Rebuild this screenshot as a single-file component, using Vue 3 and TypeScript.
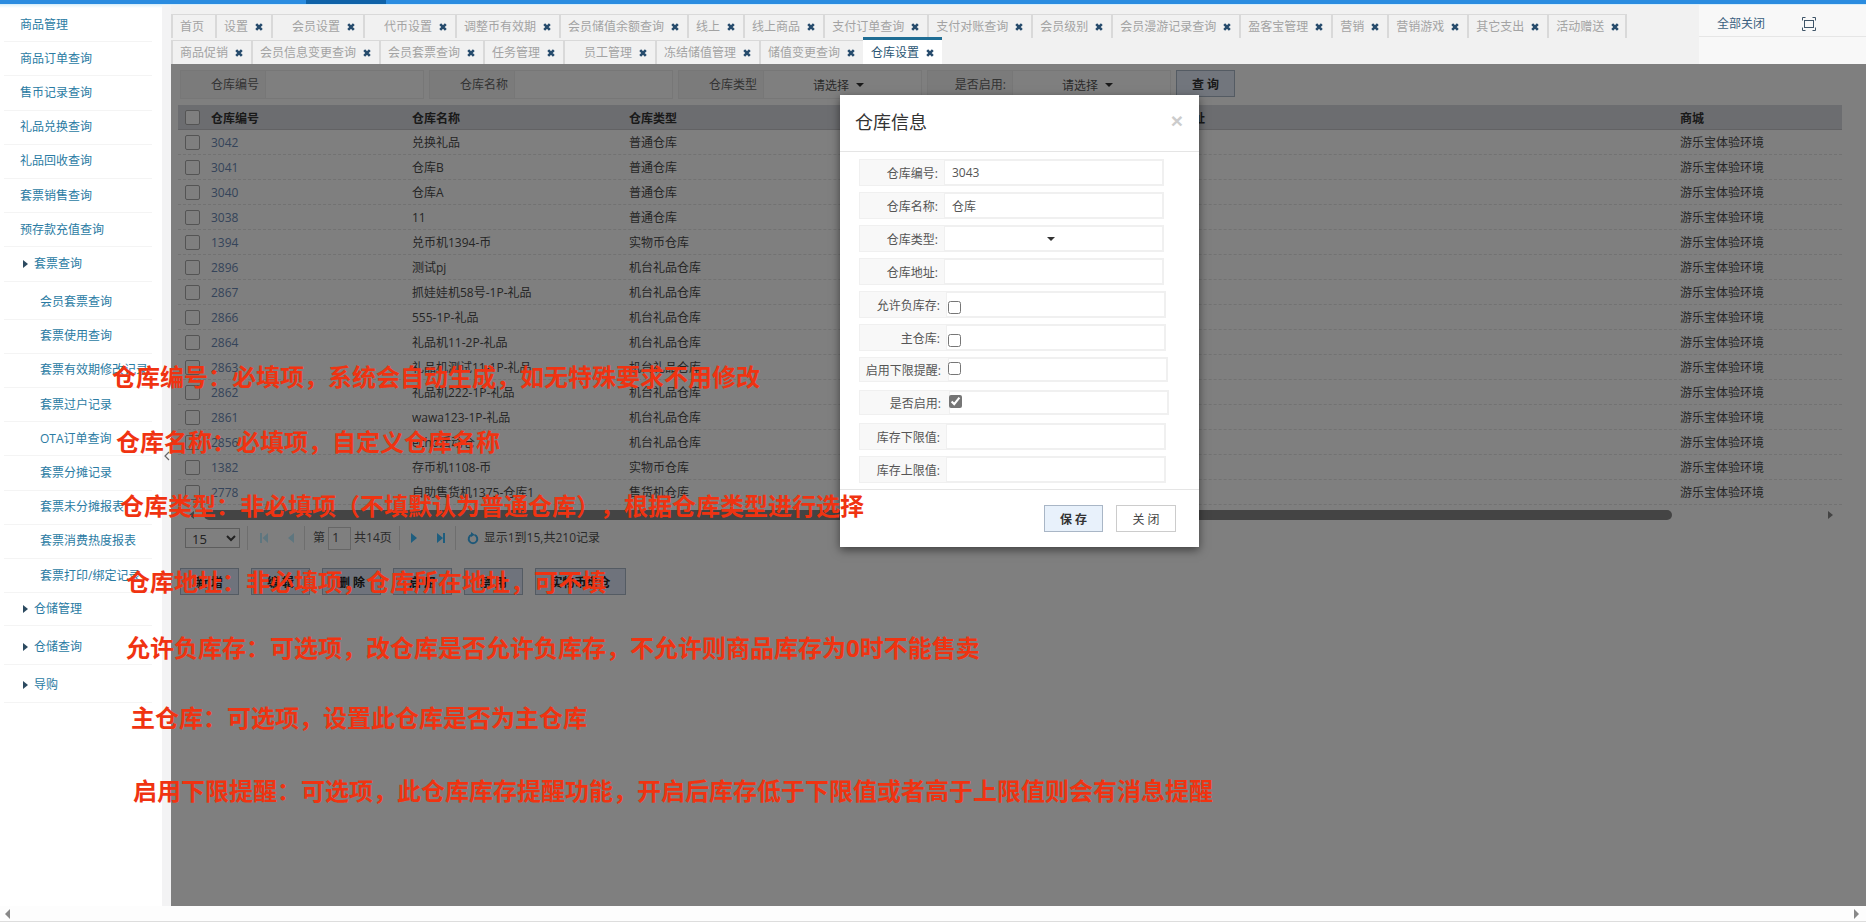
<script setup lang="ts">
type TabItem = { name: string; wide?: boolean; plain?: boolean; active?: boolean };
type MenuItem = { name: string; group?: boolean };
type RowItem = { id: string; name: string; kind: string };
type FormRow = { label: string; value?: string; type: 'text' | 'select' | 'check'; checked?: boolean; cls: string };
type Note = { text: string; left: number; top: number };

const tabRow1: TabItem[] = [
  { name: '首页', plain: true },
  { name: '设置' },
  { name: '会员设置', wide: true },
  { name: '代币设置', wide: true },
  { name: '调整币有效期' },
  { name: '会员储值余额查询' },
  { name: '线上' },
  { name: '线上商品' },
  { name: '支付订单查询' },
  { name: '支付对账查询' },
  { name: '会员级别' },
  { name: '会员漫游记录查询' },
  { name: '盈客宝管理' },
  { name: '营销' },
  { name: '营销游戏' },
  { name: '其它支出' },
  { name: '活动赠送' },
];
const tabRow2: TabItem[] = [
  { name: '商品促销' },
  { name: '会员信息变更查询' },
  { name: '会员套票查询' },
  { name: '任务管理' },
  { name: '员工管理', wide: true },
  { name: '冻结储值管理' },
  { name: '储值变更查询' },
  { name: '仓库设置', active: true },
];

const menuTop: MenuItem[] = [
  { name: '商品管理' },
  { name: '商品订单查询' },
  { name: '售币记录查询' },
  { name: '礼品兑换查询' },
  { name: '礼品回收查询' },
  { name: '套票销售查询' },
  { name: '预存款充值查询' },
  { name: '套票查询', group: true },
];
const menuSub = [
  '会员套票查询',
  '套票使用查询',
  '套票有效期修改记录',
  '套票过户记录',
  'OTA订单查询',
  '套票分摊记录',
  '套票未分摊报表',
  '套票消费热度报表',
  '套票打印/绑定记录',
];
const menuBottom = ['仓储管理', '仓储查询', '导购'];

const rows: RowItem[] = [
  { id: '3042', name: '兑换礼品', kind: '普通仓库' },
  { id: '3041', name: '仓库B', kind: '普通仓库' },
  { id: '3040', name: '仓库A', kind: '普通仓库' },
  { id: '3038', name: '11', kind: '普通仓库' },
  { id: '1394', name: '兑币机1394-币', kind: '实物币仓库' },
  { id: '2896', name: '测试pj', kind: '机台礼品仓库' },
  { id: '2867', name: '抓娃娃机58号-1P-礼品', kind: '机台礼品仓库' },
  { id: '2866', name: '555-1P-礼品', kind: '机台礼品仓库' },
  { id: '2864', name: '礼品机11-2P-礼品', kind: '机台礼品仓库' },
  { id: '2863', name: '礼品机测试11-1P-礼品', kind: '机台礼品仓库' },
  { id: '2862', name: '礼品机222-1P-礼品', kind: '机台礼品仓库' },
  { id: '2861', name: 'wawa123-1P-礼品', kind: '机台礼品仓库' },
  { id: '2856', name: 'echo活动仓', kind: '机台礼品仓库' },
  { id: '1382', name: '存币机1108-币', kind: '实物币仓库' },
  { id: '2778', name: '自助售货机1375-仓库1', kind: '售货机仓库' },
];

const actions = ['新 增', '编 辑', '删 除', '启 用', '禁 用', '实物币盘仓'];

const formRows: FormRow[] = [
  { label: '仓库编号:', value: '3043', type: 'text', cls: '' },
  { label: '仓库名称:', value: '仓库', type: 'text', cls: '' },
  { label: '仓库类型:', type: 'select', cls: '' },
  { label: '仓库地址:', type: 'text', cls: '' },
  { label: '允许负库存:', type: 'check', cls: 'w87 low' },
  { label: '主仓库:', type: 'check', cls: 'w87 low' },
  { label: '启用下限提醒:', type: 'check', cls: 'w89 short' },
  { label: '是否启用:', type: 'check', checked: true, cls: 'w90 short' },
  { label: '库存下限值:', type: 'text', cls: 'w87' },
  { label: '库存上限值:', type: 'text', cls: 'w87' },
];

const notes: Note[] = [
  { text: '仓库编号：必填项，系统会自动生成，如无特殊要求不用修改', left: 112, top: 361 },
  { text: '仓库名称：必填项，自定义仓库名称', left: 116, top: 426 },
  { text: '仓库类型：非必填项（不填默认为普通仓库），根据仓库类型进行选择', left: 120, top: 490 },
  { text: '仓库地址：非必填项，仓库所在地址，可不填', left: 126, top: 566 },
  { text: '允许负库存：可选项，改仓库是否允许负库存，不允许则商品库存为0时不能售卖', left: 126, top: 632 },
  { text: '主仓库：可选项，设置此仓库是否为主仓库', left: 131, top: 702 },
  { text: '启用下限提醒：可选项，此仓库库存提醒功能，开启后库存低于下限值或者高于上限值则会有消息提醒', left: 133, top: 775 },
];
</script>

<template>
  <div class="page">
    <div class="topbar"><span class="topbar-mark"></span></div>

    <div class="body">
      <aside class="sidebar">
        <div
          v-for="item in menuTop"
          :key="item.name"
          class="menu-item"
          :class="{ group: item.group }"
        >
          <i v-if="item.group" class="menu-arrow"></i>{{ item.name }}
        </div>
        <div class="menu-sub">
          <div v-for="name in menuSub" :key="name" class="menu-item sub">{{ name }}</div>
        </div>
        <div v-for="name in menuBottom" :key="name" class="menu-item group">
          <i class="menu-arrow"></i>{{ name }}
        </div>
      </aside>

      <div class="gutter">
        <svg width="6" height="10" viewBox="0 0 6 10"><path d="M5 1L1 5l4 4" fill="none" stroke="#666" stroke-width="1.2" /></svg>
      </div>

      <main class="main">
        <header class="tabbar">
          <div class="tabs">
            <div class="tab-row">
              <div
                v-for="tab in tabRow1"
                :key="tab.name"
                class="tab"
                :class="{ wide: tab.wide, plain: tab.plain }"
              >
                {{ tab.name }}
                <svg v-if="!tab.plain" class="tab-x" width="8" height="8" viewBox="0 0 8 8"><path d="M1.2 1.2l5.6 5.6M6.8 1.2L1.2 6.8" /></svg>
              </div>
            </div>
            <div class="tab-row second">
              <div
                v-for="tab in tabRow2"
                :key="tab.name"
                class="tab"
                :class="{ wide: tab.wide, active: tab.active }"
              >
                {{ tab.name }}
                <svg class="tab-x" width="8" height="8" viewBox="0 0 8 8"><path d="M1.2 1.2l5.6 5.6M6.8 1.2L1.2 6.8" /></svg>
              </div>
            </div>
          </div>
          <div class="tools">
            <div class="tools-line">
              <span class="close-all">全部关闭</span>
              <svg class="full" width="14" height="14" viewBox="0 0 14 14" fill="none" stroke="#3f5568" stroke-width="1">
                <path d="M.5 3.5v-3h3M10.5.5h3v3M13.5 10.5v3h-3M3.5 13.5h-3v-3" />
                <rect x="2.5" y="3.5" width="9" height="7" />
              </svg>
            </div>
          </div>
        </header>

        <section class="content">
          <div class="filter">
            <div class="field"><label>仓库编号</label><div class="box"></div></div>
            <div class="field"><label>仓库名称</label><div class="box"></div></div>
            <div class="field"><label>仓库类型</label><div class="box pick">请选择<i class="caret"></i></div></div>
            <div class="field"><label>是否启用:</label><div class="box pick">请选择<i class="caret"></i></div></div>
            <button class="btn search" type="button">查 询</button>
          </div>

          <div class="table">
            <div class="tr head">
              <div class="td"><input class="tick" type="checkbox" /></div>
              <div class="td">仓库编号</div>
              <div class="td">仓库名称</div>
              <div class="td">仓库类型</div>
              <div class="td">仓库地址</div>
              <div class="td">商城</div>
            </div>
            <div v-for="row in rows" :key="row.id" class="tr">
              <div class="td"><input class="tick" type="checkbox" /></div>
              <div class="td num">{{ row.id }}</div>
              <div class="td">{{ row.name }}</div>
              <div class="td">{{ row.kind }}</div>
              <div class="td"></div>
              <div class="td">游乐宝体验环境</div>
            </div>
          </div>

          <div class="scroll">
            <i class="scroll-left"></i>
            <div class="scroll-thumb"></div>
            <i class="scroll-right"></i>
          </div>

          <div class="pager">
            <select class="size"><option>15</option></select>
            <span class="sep"></span>
            <span class="pg off"><svg width="10" height="12" viewBox="0 0 10 12"><path d="M1 1h2v10H1zM9 1v10L3.500 6z" /></svg></span>
            <span class="pg off"><svg width="8" height="12" viewBox="0 0 8 12"><path d="M7 1v10L1 6z" /></svg></span>
            <span class="sep"></span>
            <span class="pg-text first">第</span>
            <span class="pg-input">1</span>
            <span class="pg-text">共14页</span>
            <span class="sep after"></span>
            <span class="pg"><svg width="8" height="12" viewBox="0 0 8 12"><path d="M1 1v10l6-5z" /></svg></span>
            <span class="pg"><svg width="10" height="12" viewBox="0 0 10 12"><path d="M1 1v10l6-5zM7 1h2v10H7z" /></svg></span>
            <span class="sep"></span>
            <svg class="reload" width="12" height="13" viewBox="0 0 12 13" fill="none"><path d="M7.500 2.900A4.300 4.300 0 1 1 4.500 2.900" stroke-width="2" /><path d="M4 0l3.800 2.700L4 5z" class="reload-head" /></svg>
            <span class="pg-text info">显示1到15,共210记录</span>
          </div>

          <div class="actions">
            <button
              v-for="name in actions"
              :key="name"
              class="btn action"
              :class="{ long: name.length > 3 }"
              type="button"
            >
              {{ name }}
            </button>
          </div>

          <div class="mask"></div>
        </section>
      </main>
    </div>

    <div class="hbar">
      <i class="hbar-left"></i>
      <i class="hbar-right"></i>
    </div>

    <div class="modal">
      <div class="modal-head">
        <h4>仓库信息</h4>
        <span class="modal-close">×</span>
      </div>
      <div class="modal-body">
        <div v-for="row in formRows" :key="row.label" class="form-row" :class="row.cls">
          <label>{{ row.label }}</label>
          <div class="form-box">
            <template v-if="row.type === 'text'">{{ row.value }}</template>
            <i v-else-if="row.type === 'select'" class="form-caret"></i>
            <input v-else type="checkbox" :checked="row.checked" />
          </div>
        </div>
      </div>
      <div class="modal-foot">
        <button class="btn save" type="button">保 存</button>
        <button class="btn shut" type="button">关 闭</button>
      </div>
    </div>

    <div
      v-for="note in notes"
      :key="note.left + note.text"
      class="note"
      :style="{ left: note.left + 'px', top: note.top + 'px' }"
    >
      {{ note.text }}
    </div>
  </div>
</template>

<style>
html,
body {
  margin: 0;
  background: #fff;
  overflow: hidden;
}
</style>

<style scoped>
.page {
  position: relative;
  display: flex;
  flex-direction: column;
  width: 1866px;
  height: 922px;
  overflow: hidden;
  font-family: "Open Sans", "Noto Sans CJK SC", sans-serif;
  font-size: 12px;
  color: #555;
}
.topbar {
  flex: none;
  height: 4px;
  background: #2b8ce0;
  border-bottom: 1px solid #d8eefa;
}
.topbar-mark {
  display: block;
  width: 80px;
  height: 4px;
  margin-left: 306px;
  background: #0f62a8;
}
.body {
  flex: 1;
  display: flex;
  min-height: 0;
}

/* sidebar */
.sidebar {
  flex: none;
  width: 162px;
  padding-top: 3px;
  box-sizing: border-box;
  background: linear-gradient(#e4f4fb, #fff 3px);
}
.menu-item {
  box-sizing: border-box;
  display: flex;
  align-items: center;
  height: 34.2px;
  margin: 0 10px 0 4px;
  padding-left: 16px;
  border-bottom: 1px solid #f4f4f4;
  color: #2a7ba3;
  line-height: 16px;
  white-space: nowrap;
}
.menu-item.group {
  margin-bottom: 4px;
  padding-left: 19px;
}
.menu-item.sub {
  padding-left: 36px;
}
.menu-sub {
  margin-bottom: -1px;
}
.menu-arrow {
  width: 0;
  height: 0;
  margin-right: 6px;
  border-left: 5px solid #2c4a60;
  border-top: 4px solid transparent;
  border-bottom: 4px solid transparent;
}
.gutter {
  flex: none;
  display: flex;
  align-items: center;
  justify-content: center;
  width: 9px;
  background: #f3f3f4;
}

/* tabs */
.main {
  flex: 1;
  display: flex;
  flex-direction: column;
  min-width: 0;
}
.tabbar {
  flex: none;
  display: flex;
  height: 59px;
  background: #f1f1f1;
}
.tabs {
  flex: 1;
  padding-top: 8px;
}
.tab-row {
  display: flex;
  height: 24px;
  border-top: 1px solid transparent;
}
.tab-row.second {
  height: 25px;
  margin-top: 1px;
}
.tab {
  box-sizing: border-box;
  display: flex;
  align-items: center;
  padding: 0 8px 0 7px;
  border-left: 2px solid #d9d9d9;
  border-top: 1px solid #d9d9d9;
  color: #a3a3a3;
  white-space: nowrap;
  line-height: 16px;
}
.tab-row:first-child .tab:last-child {
  border-right: 2px solid #d9d9d9;
  padding-right: 6px;
}
.tab.wide {
  padding-left: 19px;
}
.tab.plain {
  padding-right: 11px;
}
.tab-x {
  margin-left: 7px;
  fill: none;
  stroke: #264b6c;
  stroke-width: 2.6;
}
.tab.active {
  position: relative;
  margin-top: -3px;
  height: 28px;
  padding-left: 8px;
  padding-right: 8px;
  border-left: 0;
  border-top: 3px solid #1f6d94;
  background: #fff;
  color: #2b5673;
}
.tools {
  flex: none;
  width: 167px;
  background: #f8f8f8;
}
.tools-line {
  display: flex;
  align-items: center;
  box-sizing: border-box;
  height: 32px;
  padding-top: 7px;
  border-bottom: 1px solid #e6e6e6;
}
.close-all {
  margin-left: 18px;
  color: #3a5f80;
  line-height: 16px;
}
.full {
  margin-left: 37px;
}

/* content under the mask */
.content {
  position: relative;
  flex: 1;
  min-height: 0;
  padding: 6px 7px 0;
  background: #fff;
}
.mask {
  position: absolute;
  inset: 0;
  background: rgba(0, 0, 0, 0.5);
}
.filter {
  display: flex;
  gap: 5px;
  height: 27px;
  margin-left: 2px;
}
.field {
  display: grid;
  grid-template-columns: 85px 159px;
}
.field label {
  padding-right: 6px;
  text-align: right;
  line-height: 27px;
  background: #f6f6f6;
  border: 1px solid #efefef;
  border-right: 0;
  color: #666;
}
.box {
  box-sizing: border-box;
  border: 1px solid #efefef;
}
.pick {
  display: flex;
  align-items: center;
  justify-content: center;
  padding-right: 8px;
  color: #555;
}
.caret {
  width: 0;
  height: 0;
  margin-left: 7px;
  border-top: 4px solid #333;
  border-left: 4px solid transparent;
  border-right: 4px solid transparent;
}
.btn {
  box-sizing: border-box;
  padding: 0;
  border: 1px solid #a9b6c6;
  background: #e4edfb;
  font-family: inherit;
  font-size: 12px;
  font-weight: 700;
  color: #333;
}
.search {
  width: 59px;
  height: 27px;
}
.table {
  width: 1663.5px;
  margin-top: 8px;
}
.tr {
  display: grid;
  grid-template-columns: 27px 201px 217px 528px 523px 167.5px;
  height: 25px;
  border-bottom: 1px dashed #e4e4e4;
  box-sizing: border-box;
  color: #4c4c4c;
}
.tr.head {
  height: 25px;
  background: #d8dae0;
  border-bottom: 1px solid #c4c4c8;
  font-weight: 700;
  color: #333;
}
.tr.head .td + .td {
  padding-top: 1px;
}
.td {
  display: flex;
  align-items: center;
  padding-left: 6px;
  white-space: nowrap;
  overflow: hidden;
}
.td:first-child {
  padding-left: 7px;
}
.num {
  color: #6a88b4;
}
.tick {
  appearance: none;
  box-sizing: border-box;
  width: 15px;
  height: 15px;
  margin: 0;
  background: #fff;
  border: 1.5px solid #a8a8a8;
  border-radius: 2px;
}
.scroll {
  position: relative;
  height: 10px;
  width: 1663.5px;
  margin-top: 5px;
}
.scroll-thumb {
  position: absolute;
  left: 26px;
  width: 1468px;
  height: 10px;
  background: #888;
  border-radius: 5px;
}
.scroll-left,
.scroll-right {
  position: absolute;
  top: 1px;
  width: 0;
  height: 0;
  border-top: 4px solid transparent;
  border-bottom: 4px solid transparent;
}
.scroll-left {
  left: 11px;
  border-right: 5px solid #888;
}
.scroll-right {
  left: 1650px;
  border-left: 5px solid #888;
}
.pager {
  display: flex;
  align-items: center;
  height: 24px;
  margin-top: 6px;
  padding-left: 7px;
}
.size {
  box-sizing: border-box;
  width: 55px;
  height: 20px;
  margin-right: 7px;
  padding-left: 2px;
  background: #fff;
  border: 1px solid #bbb;
  font-family: inherit;
  font-size: 13px;
  color: #444;
}
.sep {
  flex: none;
  width: 1px;
  height: 24px;
  margin-right: 2px;
  background: #ddd;
}
.sep.after {
  margin-left: 7px;
  margin-right: 1px;
}
.pg {
  flex: none;
  display: flex;
  align-items: center;
  justify-content: center;
  width: 27px;
  fill: #3cbcff;
}
.pg.off {
  fill: #bcecff;
}
.pg-text {
  color: #555;
  line-height: 16px;
  white-space: nowrap;
}
.pg-text.first {
  margin-left: 6px;
}
.pg-text.info {
  margin-left: 5px;
}
.pg-input {
  box-sizing: border-box;
  width: 23px;
  height: 23px;
  margin: 0 3px;
  padding-left: 3px;
  border: 1px solid #ccc;
  line-height: 19px;
  font-size: 13px;
}
.reload {
  margin-left: 9px;
  stroke: #3cb0f0;
}
.reload-head {
  fill: #3cb0f0;
  stroke: none;
}
.actions {
  display: flex;
  gap: 12px;
  margin-top: 18px;
  margin-left: 2px;
}
.action {
  width: 59px;
  height: 27px;
  background: #dfe7f8;
  color: #222;
}
.action.long {
  width: 91px;
}

/* page scrollbar */
.hbar {
  flex: none;
  display: flex;
  align-items: center;
  justify-content: space-between;
  box-sizing: border-box;
  height: 16px;
  padding: 0 7px 0 5px;
  background: #fdfdfd;
  border-bottom: 1px solid #ddd;
}
.hbar-left,
.hbar-right {
  width: 0;
  height: 0;
  border-top: 5px solid transparent;
  border-bottom: 5px solid transparent;
}
.hbar-left {
  border-right: 5px solid #888;
}
.hbar-right {
  border-left: 5px solid #888;
}

/* dialog */
.modal {
  position: absolute;
  left: 840px;
  top: 95px;
  width: 359px;
  height: 452px;
  background: #fff;
  box-shadow: 0 3px 9px rgba(0, 0, 0, 0.5);
}
.modal-head {
  display: flex;
  align-items: center;
  justify-content: space-between;
  box-sizing: border-box;
  height: 57px;
  padding: 0 16px 2px 15px;
  border-bottom: 1px solid #e5e5e5;
}
.modal-head h4 {
  margin: 0;
  font-size: 18px;
  font-weight: 400;
  color: #333;
  line-height: 28px;
}
.modal-close {
  margin-top: -4px;
  font-family: "Liberation Sans", sans-serif;
  font-size: 21px;
  font-weight: 700;
  line-height: 21px;
  color: #ccc;
}
.modal-body {
  height: 338px;
  padding: 7px 0 0 19px;
  box-sizing: border-box;
  border-bottom: 1px solid #e5e5e5;
}
.form-row {
  display: flex;
  height: 27px;
  margin-bottom: 6px;
}
.form-row label {
  box-sizing: border-box;
  flex: none;
  width: 85px;
  padding-right: 6px;
  text-align: right;
  line-height: 27px;
  background: #f8f8f8;
  border: 1px solid #f0f0f0;
  border-right: 0;
  white-space: nowrap;
  color: #555;
}
.form-row.w87 label {
  width: 87px;
}
.form-row.w89 label {
  width: 89px;
  padding-right: 7px;
}
.form-row.w90 label {
  width: 90px;
  padding-right: 8px;
}
.form-row.short {
  height: 25px;
  margin-bottom: 8px;
}
.form-row.short label {
  line-height: 25px;
}
.form-box {
  box-sizing: border-box;
  display: flex;
  align-items: center;
  width: 219.5px;
  padding-left: 7px;
  border: 2px solid #f0f0f0;
  border-left-width: 1px;
  color: #555;
}
.form-box input {
  width: 13px;
  height: 13px;
  margin: 0 0 0 -6px;
  accent-color: #767676;
}
.form-row.low input {
  margin-top: 6px;
}
.form-row.short input {
  margin: -2px 0 0 -8px;
}
.form-caret {
  width: 0;
  height: 0;
  margin-left: 95px;
  border-top: 4px solid #333;
  border-left: 4px solid transparent;
  border-right: 4px solid transparent;
}
.modal-foot {
  display: flex;
  justify-content: flex-end;
  gap: 13px;
  padding: 15px 23px 0 0;
}
.save {
  width: 59px;
  height: 27px;
  background: #e8f1fb;
}
.shut {
  width: 60px;
  height: 27px;
  background: #fff;
  border-color: #ccc;
  font-weight: 400;
  color: #444;
}

/* red notes painted over the screenshot */
.note {
  position: absolute;
  font-size: 24px;
  font-weight: 700;
  line-height: 32px;
  color: #f03311;
  white-space: nowrap;
  text-spacing-trim: space-all;
}
</style>
